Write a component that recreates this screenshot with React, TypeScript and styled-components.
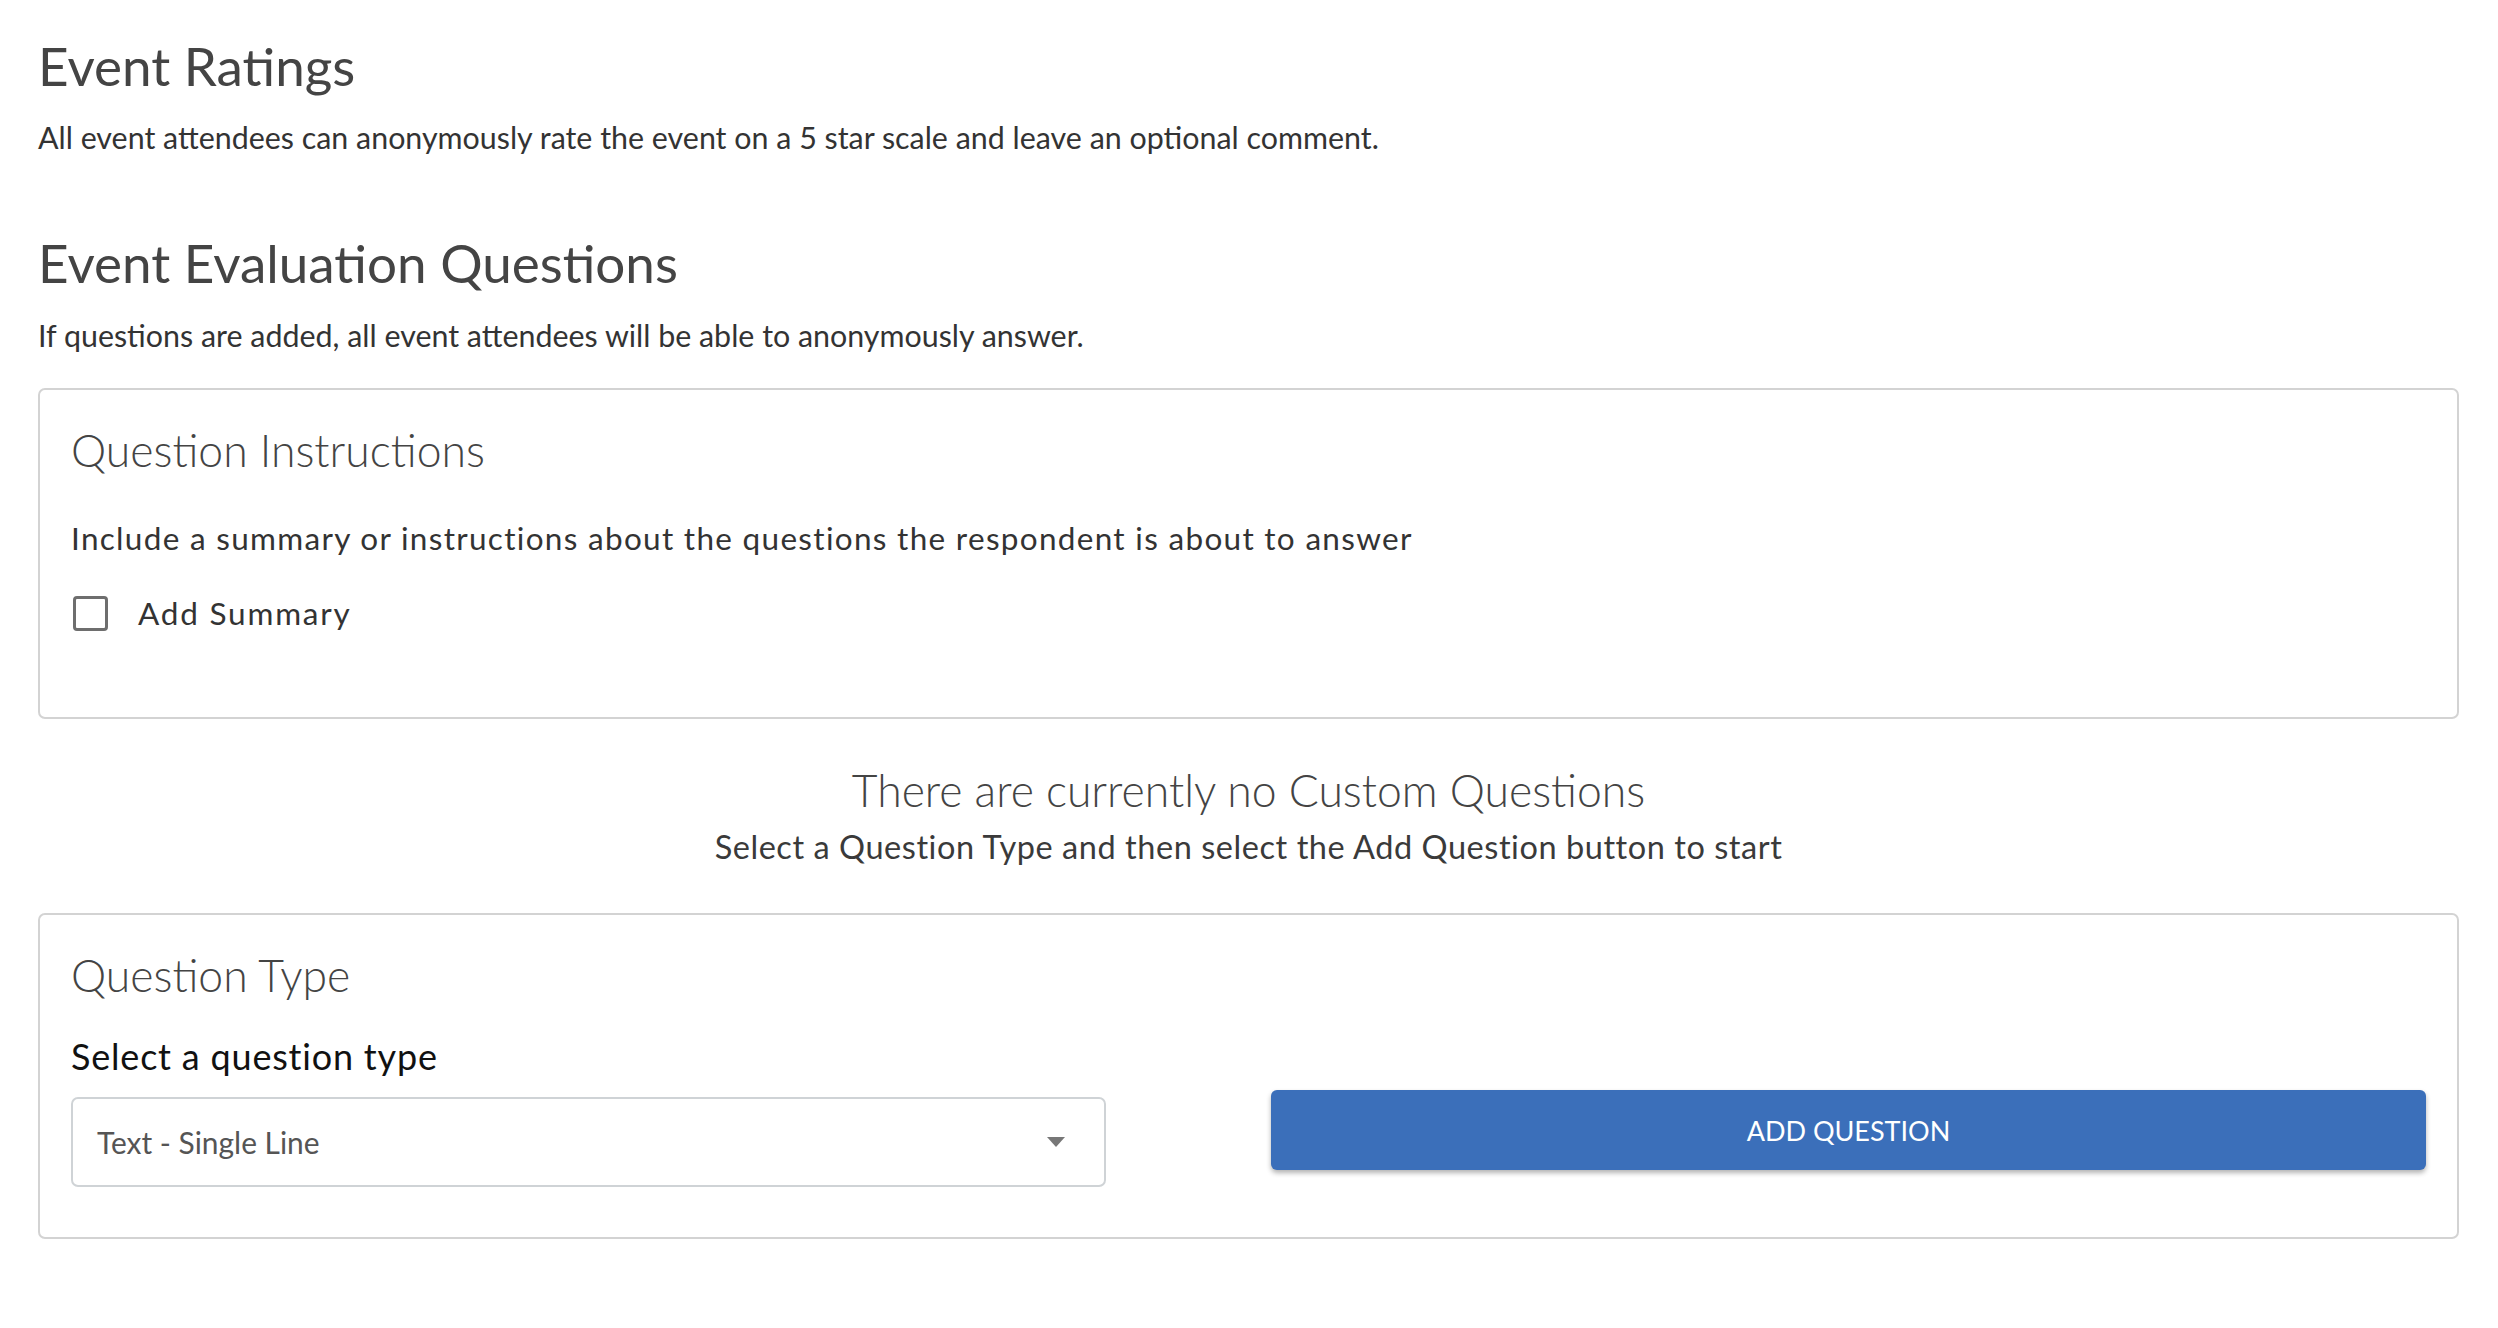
import * as React from "react";
import styled, { createGlobalStyle } from "styled-components";

const GlobalStyle = createGlobalStyle`
  html, body {
    margin: 0;
    padding: 0;
    background: #ffffff;
  }
  body {
    font-family: Lato, "Open Sans", sans-serif;
    color: #333333;
  }
`;

const Page = styled.div`
  padding: 34px 39px 80px 38px;
`;

const SectionTitle = styled.h2<{ $gap?: number }>`
  margin: ${p => p.$gap || 0}px 0 0 0;
  font-size: 53px;
  line-height: 64px;
  font-weight: 400;
  color: #444444;
`;

const SectionText = styled.p<{ $gap: number }>`
  margin: ${p => p.$gap}px 0 0 0;
  font-size: 30.4px;
  line-height: 36px;
  color: #333333;
`;

const Card = styled.section<{ $gap: number; $bottom: number }>`
  margin-top: ${p => p.$gap}px;
  border: 2px solid #d3d3d3;
  border-radius: 7px;
  padding: 32px 31px ${p => p.$bottom}px 31px;
`;

const CardTitle = styled.h3`
  margin: 0;
  font-size: 44.5px;
  line-height: 56px;
  font-weight: 300;
  color: #444444;
`;

const CardText = styled.p`
  margin: 40px 0 0 0;
  font-size: 31.5px;
  letter-spacing: 1.3px;
  line-height: 40px;
  color: #333333;
`;

const CheckRow = styled.label`
  display: flex;
  align-items: center;
  gap: 30px;
  margin-top: 35px;
  height: 40px;
  font-size: 31.5px;
  letter-spacing: 1.8px;
  color: #333333;
  cursor: pointer;
`;

const CheckBox = styled.span`
  width: 35px;
  height: 35px;
  margin-left: 2px;
  border: 3px solid #6e6e6e;
  border-radius: 4px;
  box-sizing: border-box;
`;

const EmptyState = styled.div`
  margin-top: 43px;
  text-align: center;
`;

const EmptyTitle = styled.div`
  font-size: 44.5px;
  line-height: 56px;
  font-weight: 300;
  color: #444444;
`;

const EmptyText = styled.div`
  margin-top: 9px;
  font-size: 32.5px;
  letter-spacing: 0.55px;
  line-height: 40px;
  color: #3a3a3a;
`;

const TypeRow = styled.div`
  display: grid;
  grid-template-columns: 1035px 1fr;
  column-gap: 165px;
  margin-top: 33px;
`;

const FieldLabel = styled.div`
  font-size: 36px;
  letter-spacing: 0.8px;
  line-height: 40px;
  color: #111111;
  margin-bottom: 21px;
`;

const SelectBox = styled.div`
  display: flex;
  align-items: center;
  justify-content: space-between;
  height: 90px;
  box-sizing: border-box;
  padding: 0 38px 0 24px;
  border: 2px solid #cfd3d6;
  border-radius: 7px;
  font-size: 29.9px;
  color: #555555;
`;

const Caret = styled.svg`
  width: 20px;
  height: 12px;
`;

const AddButton = styled.button`
  align-self: end;
  margin-bottom: 17px;
  height: 80px;
  border: none;
  border-radius: 6px;
  background: #3b6fba;
  box-shadow: 0 3px 5px rgba(0, 0, 0, 0.3);
  color: #ffffff;
  font-family: inherit;
  font-size: 27px;
  text-transform: uppercase;
  cursor: pointer;
`;

export default function App() {
  return (
    <Page>
      <GlobalStyle />
      <SectionTitle>Event Ratings</SectionTitle>
      <SectionText $gap={21}>
        All event attendees can anonymously rate the event on a 5 star scale and leave an optional comment.
      </SectionText>

      <SectionTitle $gap={76}>Event Evaluation Questions</SectionTitle>
      <SectionText $gap={22}>
        If questions are added, all event attendees will be able to anonymously answer.
      </SectionText>

      <Card $gap={35} $bottom={84}>
        <CardTitle>Question Instructions</CardTitle>
        <CardText>Include a summary or instructions about the questions the respondent is about to answer</CardText>
        <CheckRow>
          <CheckBox />
          Add Summary
        </CheckRow>
      </Card>

      <EmptyState>
        <EmptyTitle>There are currently no Custom Questions</EmptyTitle>
        <EmptyText>Select a Question Type and then select the Add Question button to start</EmptyText>
      </EmptyState>

      <Card $gap={46} $bottom={50}>
        <CardTitle>Question Type</CardTitle>
        <TypeRow>
          <div>
            <FieldLabel>Select a question type</FieldLabel>
            <SelectBox>
              Text - Single Line
              <Caret viewBox="0 0 20 12">
                <path d="M1 1h18L10 11z" fill="#777777" />
              </Caret>
            </SelectBox>
          </div>
          <AddButton>Add Question</AddButton>
        </TypeRow>
      </Card>
    </Page>
  );
}
